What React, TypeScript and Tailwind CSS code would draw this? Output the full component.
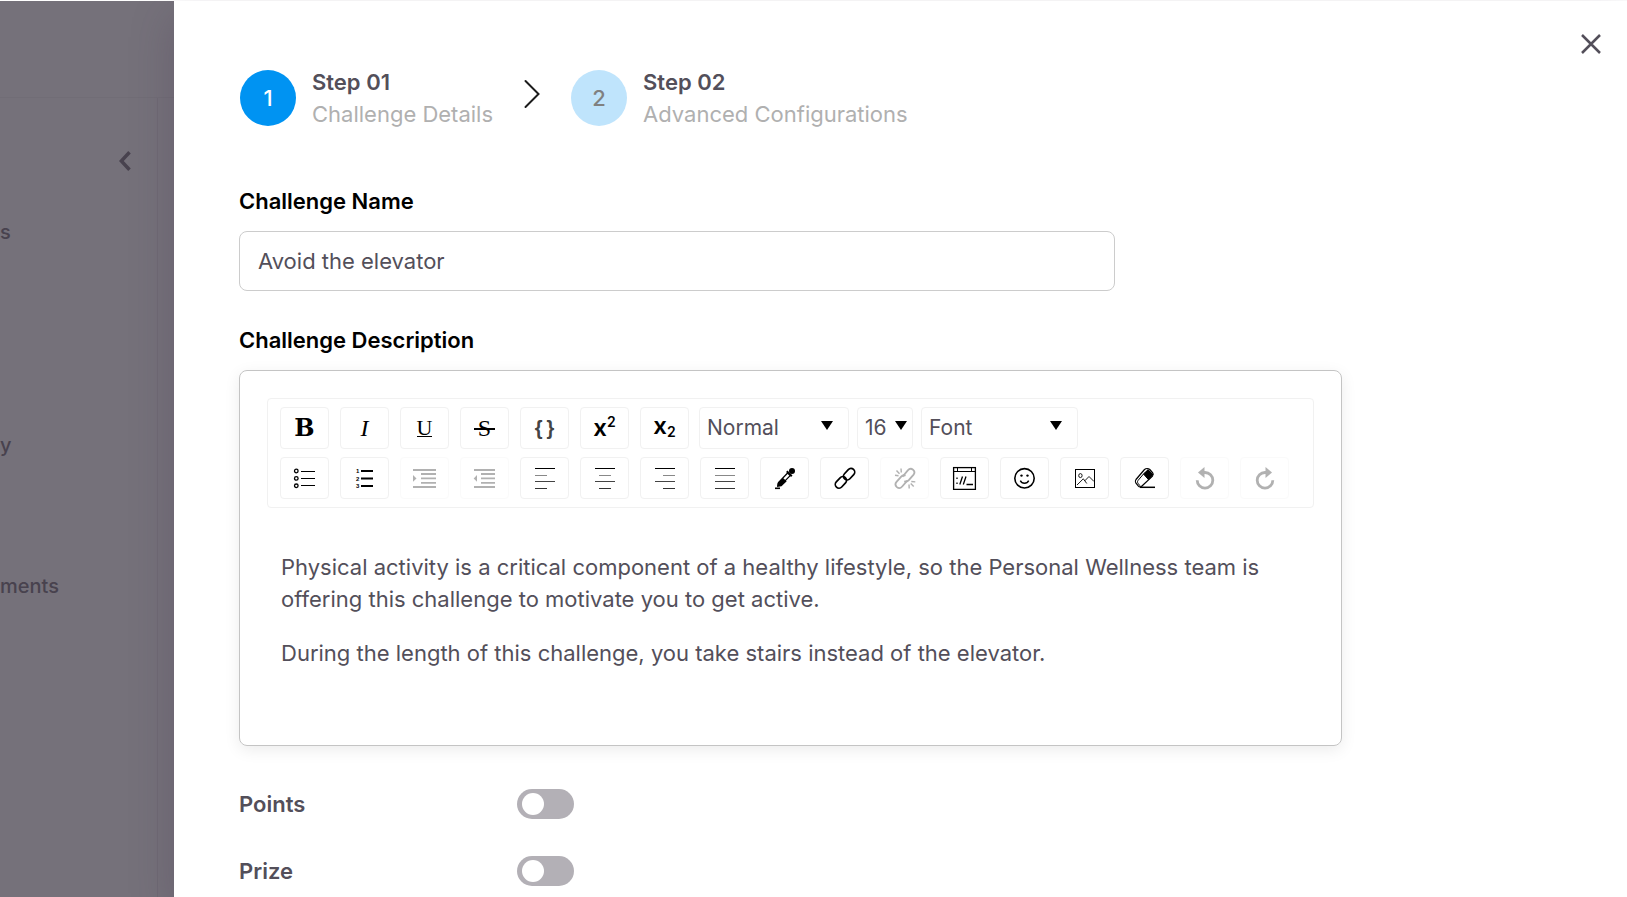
import { useState } from 'react'
import type { ReactNode } from 'react'

type Tool = { label: string; icon: ReactNode; disabled?: boolean }

const textTools: Tool[] = [
  { label: 'Bold', icon: <span className="font-['DejaVu_Serif',serif] text-2xl font-bold">B</span> },
  { label: 'Italic', icon: <span className="font-['Liberation_Serif',serif] text-2xl italic">I</span> },
  {
    label: 'Underline',
    icon: <span className="border-b border-black font-['Liberation_Serif',serif] text-[22px] leading-[17px]">U</span>,
  },
  {
    label: 'Strikethrough',
    icon: (
      <span className="relative px-1 font-['Liberation_Serif',serif] text-2xl">
        S
        <span className="absolute inset-x-0 top-1/2 h-[2px] bg-black" />
      </span>
    ),
  },
  {
    label: 'Monospace',
    icon: (
      <span className="flex gap-1 font-['Liberation_Sans',sans-serif] text-xl font-bold text-[#444]">
        <span>{'{'}</span>
        <span>{'}'}</span>
      </span>
    ),
  },
  {
    label: 'Superscript',
    icon: (
      <span className="flex items-center text-2xl font-semibold">
        x<span className="mb-3 text-sm">2</span>
      </span>
    ),
  },
  {
    label: 'Subscript',
    icon: (
      <span className="flex items-center pb-1 text-2xl font-semibold">
        x<span className="mt-3 text-sm">2</span>
      </span>
    ),
  },
]

const blockTools: Tool[] = [
  {
    label: 'Unordered list',
    icon: (
      <Icon>
        <g strokeWidth="1.3">
          <circle cx="4.3" cy="5" r="1.8" />
          <circle cx="4.3" cy="12.4" r="1.8" />
          <circle cx="4.3" cy="19.8" r="1.8" />
        </g>
        <path d="M9 5.5h14M9 12.5h14M9 19.5h14" strokeWidth="1.2" />
      </Icon>
    ),
  },
  {
    label: 'Ordered list',
    icon: (
      <Icon>
        <g className="font-['Liberation_Sans',sans-serif] text-[6px] font-bold" fill="currentColor" stroke="none">
          <text x="4" y="7">1</text>
          <text x="4" y="14.5">2</text>
          <text x="4" y="22">3</text>
        </g>
        <path d="M9 5h12M9 12.5h12M9 20h12" strokeWidth="2" />
      </Icon>
    ),
  },
  {
    label: 'Indent',
    disabled: true,
    icon: (
      <Icon>
        <path d="M1 4h23M9 8h15M9 12.4h15M9 16.8h15M1 21h23" strokeWidth="1.8" />
        <path d="M1 9l3.5 3.4L1 15.8z" fill="currentColor" stroke="none" />
      </Icon>
    ),
  },
  {
    label: 'Outdent',
    disabled: true,
    icon: (
      <Icon>
        <path d="M2 4h21M9 8h14M9 12.4h14M9 16.8h14M2 21h21" strokeWidth="1.8" />
        <path d="M5 9l-3.3 3.4L5 15.8z" fill="currentColor" stroke="none" />
      </Icon>
    ),
  },
  { label: 'Align left', icon: <Lines second="M3 9.5h12" fourth="M3 22.5h12" /> },
  { label: 'Align center', icon: <Lines second="M7 9.5h12" fourth="M7 22.5h12" /> },
  { label: 'Align right', icon: <Lines second="M11 9.5h12" fourth="M11 22.5h12" /> },
  { label: 'Justify', icon: <Lines second="M3 9.5h20" fourth="M3 22.5h20" /> },
  {
    label: 'Text color',
    icon: (
      <Icon>
        <circle cx="20" cy="5" r="3" fill="currentColor" stroke="none" />
        <path d="M14.8 5.2l5 5" strokeWidth="2" />
        <path d="M15.6 7L6.5 16.5l-.5 3 3-.6L18.2 9.6z" fill="white" strokeWidth="1.3" />
        <path d="M11 12l-5.3 5-.7 4 4.5-.7 5.2-5.1z" fill="currentColor" stroke="none" />
        <path d="M3 22.3h5" strokeWidth="1.6" />
      </Icon>
    ),
  },
  {
    label: 'Link',
    icon: (
      <Icon>
        <g strokeWidth="1.7">
          <rect x="10.6" y="4.5" width="13" height="7.4" rx="3.7" transform="rotate(-47 17.1 8.2)" />
          <rect x="2.4" y="12.7" width="13" height="7.4" rx="3.7" transform="rotate(-47 8.9 16.4)" />
        </g>
      </Icon>
    ),
  },
  {
    label: 'Unlink',
    disabled: true,
    icon: (
      <Icon>
        <g strokeWidth="1.8">
          <path d="M10.5 10.8l5.3-6.4c1.5-1.7 3.5-2 5.2-.7 1.7 1.5 1.8 3.5.4 5.2l-4.6 5.3c-1.2 1.3-2.9 1.7-4.4.9" />
          <path d="M15.3 14.6l-5.1 5.9c-1.5 1.7-3.6 2-5.3.6-1.7-1.5-1.8-3.5-.4-5.2l4.7-5.3c1.2-1.3 2.9-1.6 4.3-.8" />
          <path d="M9 2.5l.3 4M4.500 4.500l3 3.300M3 9.300l3.500.5M17 18.500l.2 4M18.700 17.500l3 3M19.300 15.500l4 .4" strokeWidth="1.4" />
        </g>
      </Icon>
    ),
  },
  {
    label: 'Embed',
    icon: (
      <Icon>
        <rect x="1.6" y="1.6" width="21.8" height="21.8" strokeWidth="1.3" />
        <path d="M2 5.5h21M5.5 2v3M19.5 2v3" strokeWidth="1" />
        <path d="M5 11.5v1.5M5 16.5v1.5M10.5 10.5l-2.7 8M14 10.5l-2.7 8M14.5 18.5h6.5" strokeWidth="1.3" />
      </Icon>
    ),
  },
  {
    label: 'Emoji',
    icon: (
      <Icon>
        <circle cx="12.5" cy="12.3" r="9.7" strokeWidth="1.6" />
        <circle cx="9.5" cy="9.6" r="1.2" fill="currentColor" stroke="none" />
        <circle cx="15.5" cy="9.6" r="1.2" fill="currentColor" stroke="none" />
        <path d="M8.3 14.6c1.7 3.5 6.7 3.5 8.4 0" strokeWidth="1.4" />
      </Icon>
    ),
  },
  {
    label: 'Image',
    icon: (
      <Icon>
        <rect x="3.5" y="3.5" width="19" height="18" strokeWidth="1" />
        <ellipse cx="8.4" cy="9.6" rx="1.7" ry="2" strokeWidth=".9" />
        <path d="M5 19l6.3-6.2 3.5 4.7M12.8 14.8L17 10.5l5 5" strokeWidth=".9" />
      </Icon>
    ),
  },
  {
    label: 'Remove formatting',
    icon: (
      <Icon>
        <path d="M12.5 3.5L4 13.5c-1 1.3-1 2.4-.2 3.5l2.6 3.2c.9 1 2.3 1 3.3 0l10.8-10c1-1.2 1-2.4.1-3.5l-2.8-3.2c-1.4-1.2-3.9-1.2-5.3 0z" fill="white" strokeWidth="1.2" />
        <path d="M16 3l5.5 5.5-4.7 5.5-5.3-6z" fill="currentColor" stroke="none" />
        <path d="M11.5 8L6 14.5c-.8 1.2-.6 2 .2 3l1.8 2.3M14 5.5L11.5 8l5.3 6" strokeWidth="1" />
        <path d="M8 21.3h15" strokeWidth="1.5" />
      </Icon>
    ),
  },
  {
    label: 'Undo',
    disabled: true,
    icon: (
      <Icon>
        <path d="M5.2 14.3a7.8 7.8 0 1 0 7.8-7.8h-1.5" strokeWidth="2.8" />
        <path d="M12.5 1v11L6 6.5z" fill="currentColor" stroke="none" />
      </Icon>
    ),
  },
  {
    label: 'Redo',
    disabled: true,
    icon: (
      <Icon>
        <path d="M20.8 14.3a7.8 7.8 0 1 1-7.8-7.8h1.5" strokeWidth="2.8" />
        <path d="M13.5 1v11L20 6.5z" fill="currentColor" stroke="none" />
      </Icon>
    ),
  },
]

export default function App() {
  const [name, setName] = useState('Avoid the elevator')

  return (
    <div className="flex h-screen overflow-hidden bg-white pt-px font-['Inter',sans-serif] text-[22px] leading-8 text-[#534f5a]">
      {/* Dimmed page behind the drawer */}
      <aside className="flex w-[174px] shrink-0 flex-col bg-[#75717a] text-xl leading-7 font-medium text-[#48424e]">
        <div className="h-[97px] shrink-0 border-b border-[#716d76]" />
        <div className="mr-4 flex flex-1 flex-col border-r border-[#6f6a74]">
          <button aria-label="Collapse menu" className="mt-[53px] mr-[26px] self-end">
            <svg width="12" height="20" viewBox="0 0 12 20" fill="none" stroke="currentColor" strokeWidth="3.5">
              <path d="M10.5 1.2L2.3 10l8.2 8.8" />
            </svg>
          </button>
          <nav className="flex flex-col">
            <a href="#s" className="mt-[47px]">s</a>
            <a href="#y" className="mt-[185px]">y</a>
            <a href="#ments" className="mt-[113px]">ments</a>
          </nav>
        </div>
      </aside>

      {/* Drawer */}
      <main className="relative flex flex-1 items-start bg-white pl-[65px] shadow-[0_16px_40px_rgba(70,50,80,0.28)]">
        <div className="w-full max-w-[1103px] pt-[65px]">
          <ol className="flex items-center pl-px">
            <Step number={1} title="Step 01" text="Challenge Details" active />
            <li aria-hidden="true" className="mr-[31px] mb-2 ml-[31px]">
              <svg width="16" height="30" viewBox="0 0 16 30" fill="none" stroke="#1c1c1c" strokeWidth="2" strokeLinecap="round">
                <path d="M1.5 2l13 13-13 13" />
              </svg>
            </li>
            <Step number={2} title="Step 02" text="Advanced Configurations" />
          </ol>

          <label htmlFor="challenge-name" className="mt-[55px] block font-semibold text-black">
            Challenge Name
          </label>
          <input
            id="challenge-name"
            value={name}
            onChange={(e) => setName(e.target.value)}
            className="mt-[14px] block h-[60px] w-full max-w-[876px] rounded-lg border border-[#ccc] px-[18px] outline-none"
          />

          <h2 id="description-label" className="mt-[33px] font-semibold text-black">Challenge Description</h2>
          <div className="mt-[14px] rounded-lg border border-[#c4c4c4] p-[27px] shadow-[0_4px_16px_rgba(0,0,0,0.08)]">
            <div className="flex flex-col gap-2 rounded-sm border border-[#f1f1f1] px-3 py-2">
              <div className="flex gap-[10px]">
                <ToolGroup tools={textTools} />
                <div className="flex gap-2">
                  <ToolSelect label="Block type" options={['Normal', 'H1', 'H2', 'Blockquote']} className="w-[150px]" arrow="right-4" />
                  <ToolSelect label="Font size" options={['16', '18', '24']} className="w-14" arrow="right-[6px]" />
                  <ToolSelect label="Font family" options={['Font', 'Arial', 'Georgia']} className="w-[157px]" arrow="right-4" />
                </div>
              </div>
              <ToolGroup tools={blockTools} />
            </div>
            <div
              role="textbox"
              aria-multiline="true"
              aria-labelledby="description-label"
              contentEditable
              suppressContentEditableWarning
              className="px-[14px] pt-[43px] pb-[49px] outline-none"
            >
              <p>
                Physical activity is a critical component of a healthy lifestyle, so the Personal Wellness team is
                offering this challenge to motivate you to get active.
              </p>
              <p className="mt-[22px]">During the length of this challenge, you take stairs instead of the elevator.</p>
            </div>
          </div>

          <div className="mt-[42px] flex flex-col gap-[35px]">
            <Toggle id="points" label="Points" />
            <Toggle id="prize" label="Prize" />
          </div>
        </div>

        <button aria-label="Close" className="mt-[31px] mr-6 ml-auto">
          <svg width="24" height="24" viewBox="0 0 24 24" fill="none" stroke="currentColor" strokeWidth="2.5">
            <path d="M3 3l18 18M21 3L3 21" />
          </svg>
        </button>
      </main>
    </div>
  )
}

function Step({ number, title, text, active }: { number: number; title: string; text: string; active?: boolean }) {
  return (
    <li className="flex items-center gap-4">
      <span
        className={`flex size-14 items-center justify-center rounded-full font-medium ${active ? 'bg-[#0093f2] text-white' : 'bg-[#bfe4fc] text-[#808080]'}`}
      >
        {number}
      </span>
      <div>
        <p className="font-semibold">{title}</p>
        <p className="text-[#b0b0b0]">{text}</p>
      </div>
    </li>
  )
}

function ToolGroup({ tools }: { tools: Tool[] }) {
  return (
    <div className="flex gap-[11px]">
      {tools.map((tool) => (
        <button
          key={tool.label}
          aria-label={tool.label}
          disabled={tool.disabled}
          className="flex h-[42px] w-[49px] items-center justify-center rounded-sm border border-[#f1f1f1] text-black disabled:opacity-30"
        >
          {tool.icon}
        </button>
      ))}
    </div>
  )
}

function ToolSelect({ label, options, className, arrow }: { label: string; options: string[]; className: string; arrow: string }) {
  return (
    <div className={`relative ${className}`}>
      <select aria-label={label} className="h-[42px] w-full appearance-none rounded-sm border border-[#f1f1f1] pl-[7px] text-[21px] outline-none">
        {options.map((option) => (
          <option key={option}>{option}</option>
        ))}
      </select>
      <svg className={`pointer-events-none absolute top-[14px] ${arrow}`} width="12" height="9" viewBox="0 0 12 9">
        <path d="M0 0h12L6 9z" />
      </svg>
    </div>
  )
}

function Toggle({ id, label }: { id: string; label: string }) {
  return (
    <div className="flex items-center">
      <label htmlFor={id} className="w-[278px] font-semibold">{label}</label>
      <input
        id={id}
        type="checkbox"
        role="switch"
        className="h-[30px] w-[57px] appearance-none rounded-full bg-[#b3b0b6] px-[5px] py-1 before:block before:size-[22px] before:rounded-full before:bg-white checked:bg-[#0093f2] checked:before:ml-auto"
      />
    </div>
  )
}

function Icon({ children }: { children: ReactNode }) {
  return (
    <svg width="25" height="24" viewBox="0 0 25 24" fill="none" stroke="currentColor">
      {children}
    </svg>
  )
}

function Lines({ second, fourth }: { second: string; fourth: string }) {
  return (
    <Icon>
      <path d="M3 2.5h20" />
      <path d={second} stroke="#888" />
      <path d="M3 15.5h20" stroke="#444" />
      <path d={fourth} stroke="#333" />
    </Icon>
  )
}
